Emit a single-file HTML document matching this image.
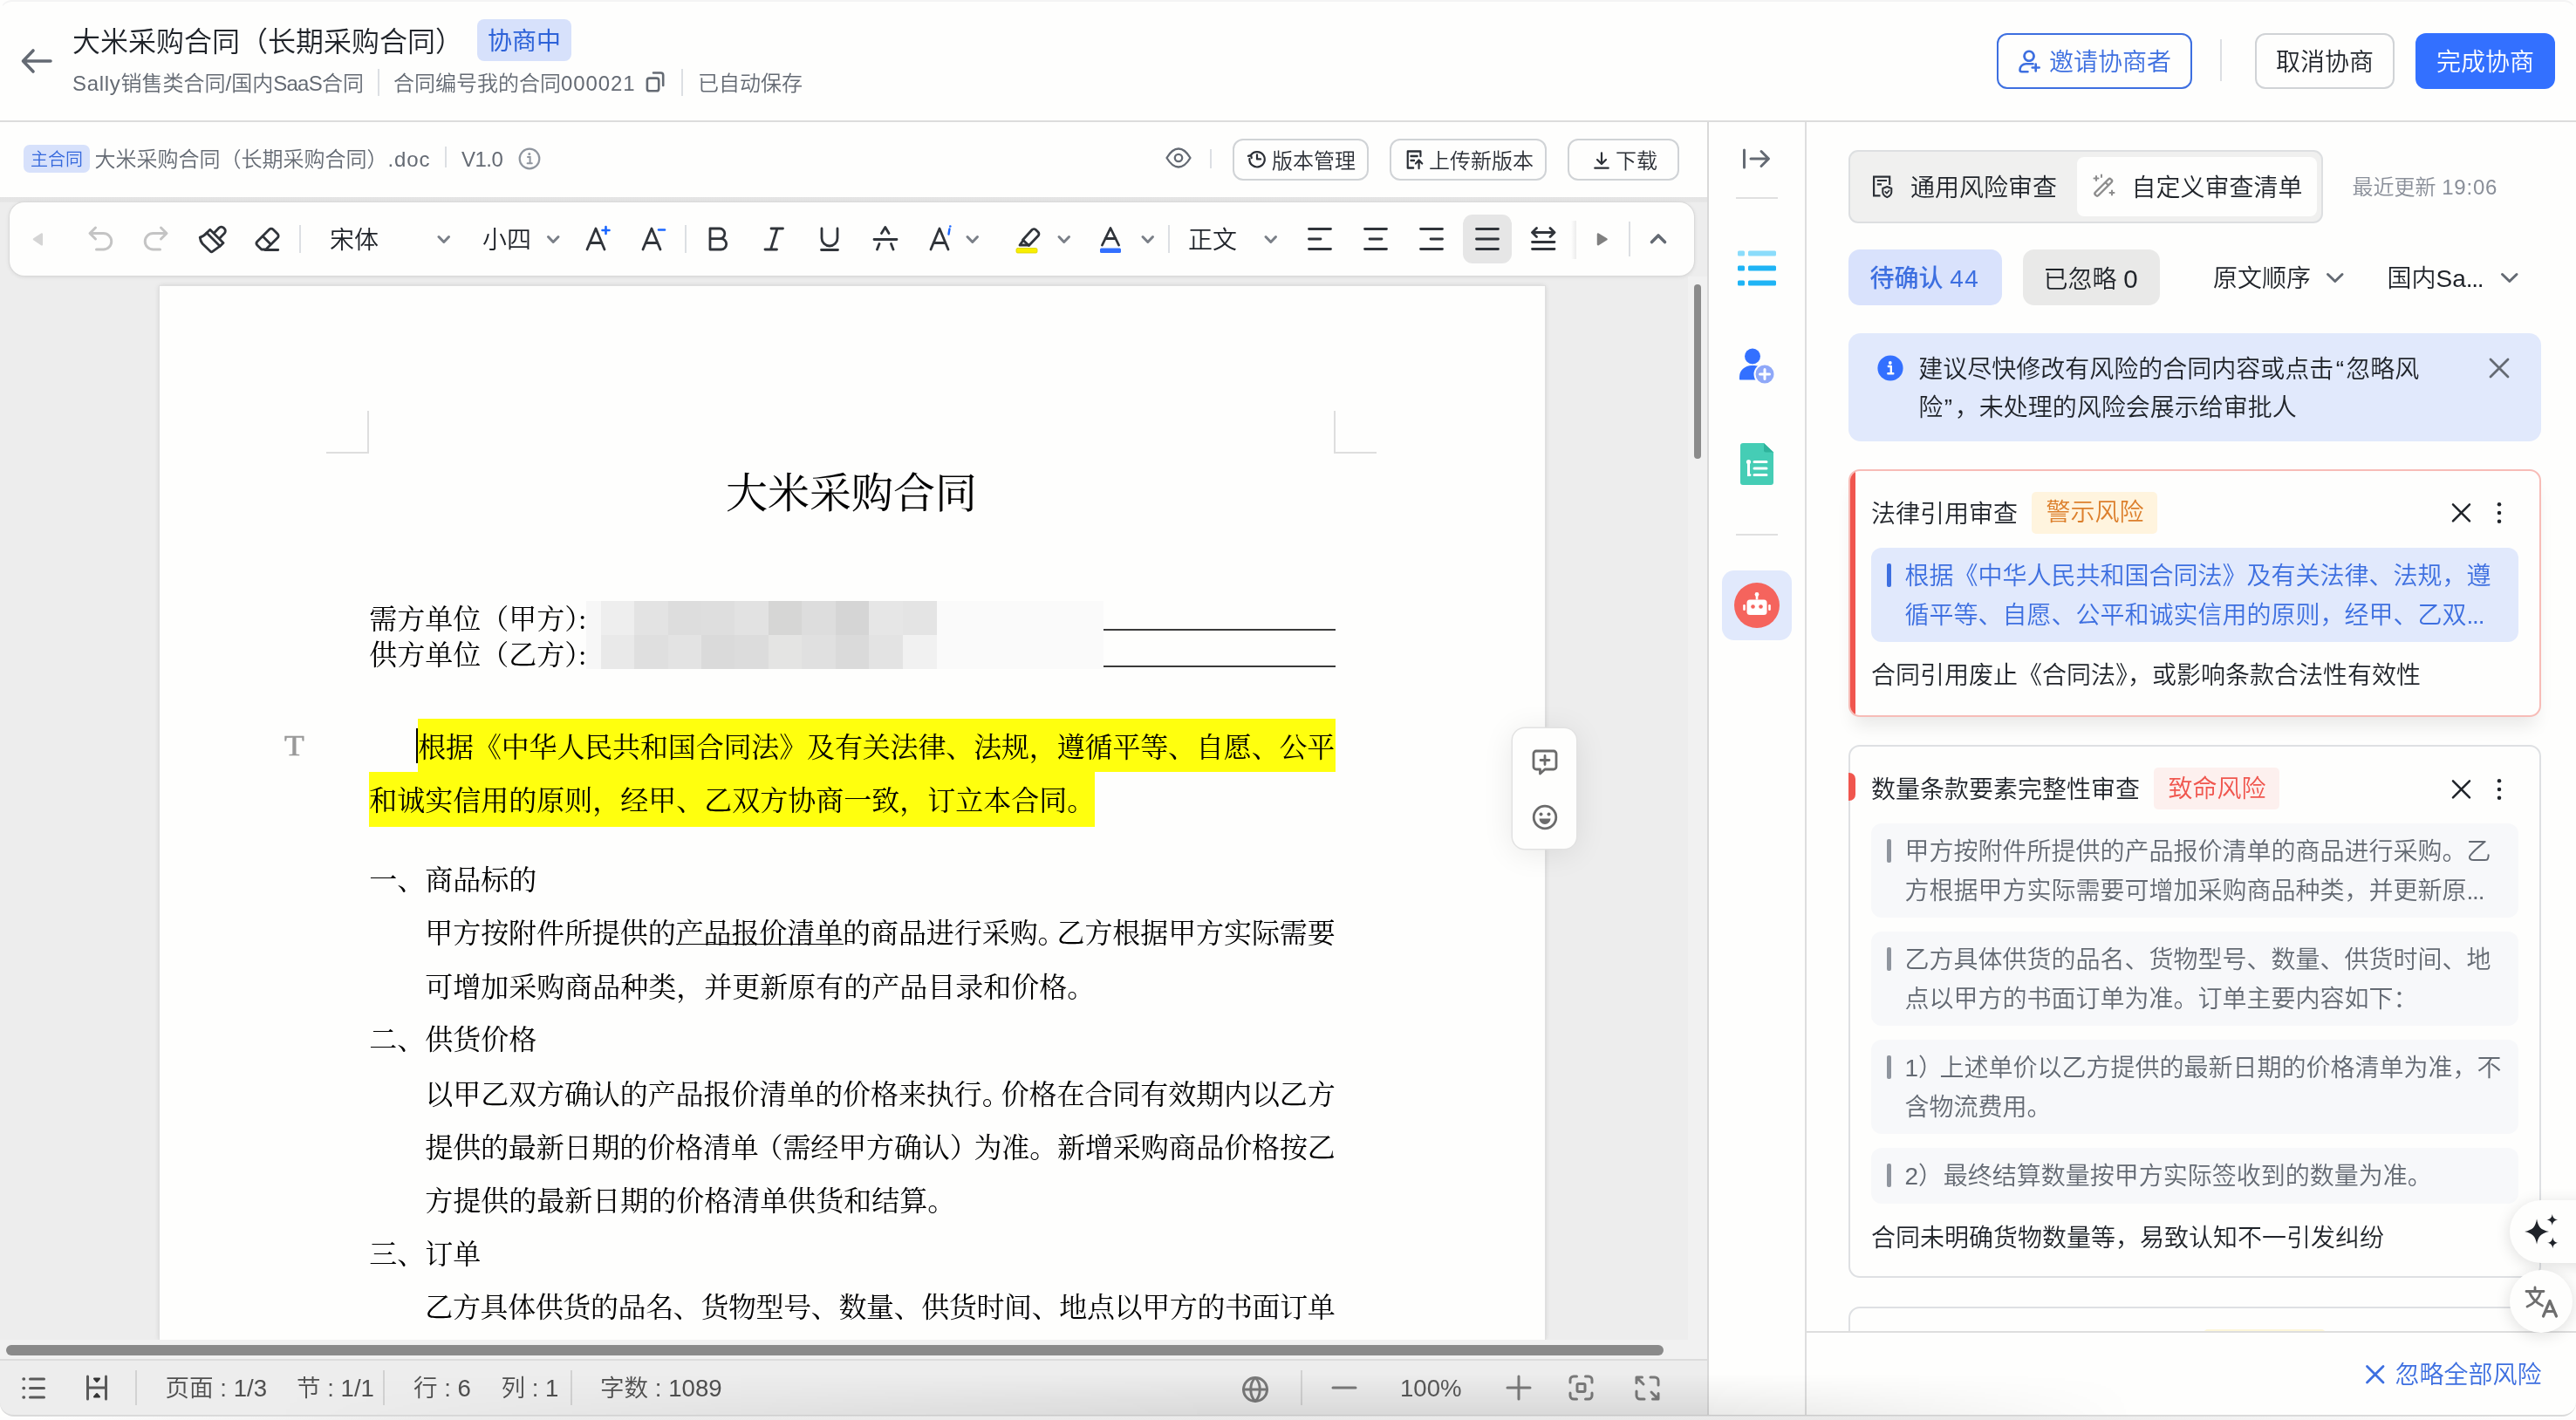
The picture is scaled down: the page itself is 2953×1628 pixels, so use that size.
<!DOCTYPE html>
<html lang="zh-CN">
<head>
<meta charset="utf-8">
<title>大米采购合同（长期采购合同）</title>
<style>
*{box-sizing:border-box;margin:0;padding:0}
html,body{width:2953px;height:1628px;overflow:hidden;background:#fefefd}
body{position:relative;font-weight:350;font-family:"Liberation Sans","Noto Sans CJK SC",sans-serif;color:#1f2329;-webkit-font-smoothing:antialiased}
.a{position:absolute}
.t{position:absolute;white-space:nowrap}
.f32{font-size:32px;line-height:44px;height:44px}
.f28{font-size:28px;line-height:40px;height:40px}
.f24{font-size:24px;line-height:34px;height:34px}
.gray{color:#646a73}
.blue{color:#3d6fe0}
.vsep{position:absolute;width:2px;background:#dcdfe3}
.btn{position:absolute;border:2px solid #d0d3d6;border-radius:12px;background:#fefefd}
svg{position:absolute;overflow:visible}
.ic{fill:none;stroke:#2b2f36;stroke-width:3;stroke-linecap:round;stroke-linejoin:round}
.doc{font-weight:400;font-family:"Liberation Serif","Noto Serif CJK SC",serif;color:#000;font-size:32px;line-height:62px;height:62px;position:absolute;white-space:nowrap}
.j{text-align:justify;text-align-last:justify;white-space:normal;overflow:hidden}
.hp{margin-right:-10px}
.q{position:absolute;left:2145px;width:742px;border-radius:12px;background:#f7f8fa}
.qb{position:absolute;left:18px;top:18px;width:5px;height:27px;border-radius:2px;background:#8f959e}
.ql{position:absolute;left:38.5px;white-space:nowrap;font-size:28px;line-height:44px;height:44px;color:#646a73}
.sb{font-size:27.6px;line-height:40px;height:40px;color:#4f4f4f;margin-top:-0.3px}
</style>
</head>
<body>
<div id="app" style="position:absolute;left:0;top:0;width:2953px;height:1628px;will-change:transform">

<!-- ===== top header ===== -->
<div class="a" style="left:0;top:0;width:2953px;height:60px;border-top:2px solid #f4f4f4;border-left:1px solid rgba(0,0,0,0);border-right:1px solid rgba(0,0,0,0);border-radius:14px 14px 0 0"></div>
<div class="a" style="left:0;top:138px;width:2953px;height:2px;background:#dcdcdc"></div>
<svg style="left:24px;top:56px" width="38" height="28" viewBox="0 0 38 28"><path class="ic" style="stroke:#646a73;stroke-width:3.6" d="M14 2 L2.5 14 L14 26 M3 14 H34"/></svg>
<div class="t f32" style="left:83px;top:25.5px;color:#1f2329">大米采购合同（长期采购合同）</div>
<div class="a" style="left:547px;top:22px;width:108px;height:48px;border-radius:8px;background:#d7e1fb"></div>
<div class="t f28" style="left:559px;top:27.5px;color:#2d62d8;font-weight:400">协商中</div>
<div class="t f24 gray" style="left:83px;top:78.6px"><span style="letter-spacing:.7px">Sally</span>销售类合同/国内<span style="letter-spacing:-.75px">SaaS</span>合同</div>
<div class="vsep" style="left:433px;top:79px;height:31px"></div>
<div class="t f24 gray" style="left:451px;top:78.6px">合同编号我的合同<span style="letter-spacing:.9px">000021</span></div>
<svg style="left:738px;top:80px" width="26" height="28" viewBox="738 80 26 28"><path class="ic" style="stroke:#646a73;stroke-width:2.6" d="M749 83.500 H757.500 A2.700 2.700 0 0 1 760.200 86.200 V98"/><rect x="741.900" y="89.600" width="13.300" height="14.700" rx="2.600" class="ic" style="stroke:#646a73;stroke-width:2.600"/></svg>
<div class="vsep" style="left:781px;top:79px;height:31px"></div>
<div class="t f24 gray" style="left:800px;top:78.6px">已自动保存</div>

<div class="btn" style="left:2289px;top:38px;width:224px;height:64px;border-color:#3d6fe0"></div>
<svg style="left:2310px;top:55px" width="30" height="30" viewBox="2310 55 30 30"><path class="ic" style="stroke:#3d6fe0;stroke-width:2.6" d="M2326 58.8 a5.500 5.500 0 1 0 0.100 0 Z M2330.500 73.200 H2322.500 A7 7 0 0 0 2315.500 80 A2.300 2.300 0 0 0 2317.800 82.300 H2324.500 M2329.700 77.500 H2337.700 M2333.700 73.500 V81.500"/></svg>
<div class="t f28 blue" style="left:2349px;top:52px">邀请协商者</div>
<div class="vsep" style="left:2545px;top:45px;height:48px"></div>
<div class="btn" style="left:2585px;top:38px;width:160px;height:64px"></div>
<div class="t f28" style="left:2609px;top:52px">取消协商</div>
<div class="a" style="left:2769px;top:38px;width:160px;height:64px;border-radius:12px;background:#3370ff"></div>
<div class="t f28" style="left:2793px;top:52px;color:#fff">完成协商</div>

<!-- ===== file bar ===== -->
<div class="a" style="left:27px;top:166px;width:76px;height:32px;border-radius:7px;background:#d7e1fb"></div>
<div class="t" style="color:#3568dc;left:35px;top:167.5px;font-size:20px;line-height:30px;height:30px">主合同</div>
<div class="t f24 gray" style="left:108.5px;top:165.8px">大米采购合同（长期采购合同）<span style="letter-spacing:.9px">.doc</span></div>
<div class="vsep" style="left:510px;top:168px;height:24px"></div>
<div class="t f24 gray" style="left:529px;top:165.5px"><span style="letter-spacing:-.5px">V1.0</span></div>
<svg style="left:594px;top:169px" width="26" height="26" viewBox="0 0 26 26"><circle cx="13" cy="13" r="11.3" fill="none" stroke="#8f959e" stroke-width="2.2"/><path d="M11 11 h2.6 v7 M10.6 18.2 h5.2" fill="none" stroke="#8f959e" stroke-width="2" stroke-linecap="round"/><circle cx="12.8" cy="7.6" r="1.5" fill="#8f959e"/></svg>
<svg style="left:1336px;top:169px" width="30" height="24" viewBox="0 0 30 24"><path d="M1.5 12 C6 4.5 10.5 1.5 15 1.5 S24 4.5 28.500 12 C24 19.500 19.500 22.500 15 22.500 S6 19.500 1.5 12 Z" fill="none" stroke="#646a73" stroke-width="2.3" stroke-linejoin="round"/><circle cx="15" cy="12" r="4.2" fill="none" stroke="#646a73" stroke-width="2.3"/></svg>
<div class="vsep" style="left:1387px;top:171px;height:22px"></div>
<div class="btn" style="left:1413px;top:159px;width:156px;height:48px"></div>
<svg style="left:1430px;top:171px" width="22" height="22" viewBox="0 0 24 24"><path class="ic" style="stroke-width:2.4" d="M4.2 7.5 A9.500 9.500 0 1 1 2.6 12 M1 8.6 L4.400 7.6 L5.2 11 M12 7 V12.500 H16.500"/></svg>
<div class="t f24" style="left:1458px;top:167.7px;color:#2b2f36">版本管理</div>
<div class="btn" style="left:1593px;top:159px;width:180px;height:48px"></div>
<svg style="left:1611px;top:171.3px" width="22" height="24" preserveAspectRatio="none" viewBox="0 0 24 24"><path class="ic" style="stroke-width:2.4" d="M19 8 V2.500 H3 V21.500 H10 M7 8 H15 M7 13 H11 M17 22 V13 M13 16.500 L17 12.500 L21 16.500"/></svg>
<div class="t f24" style="left:1638px;top:167.7px;color:#2b2f36">上传新版本</div>
<div class="btn" style="left:1797px;top:159px;width:128px;height:48px"></div>
<svg style="left:1826px;top:172.5px" width="20" height="22" viewBox="0 0 22 24"><path class="ic" style="stroke-width:2.4" d="M11 2.500 V16 M5.5 11 L11 16.500 L16.500 11 M2.500 21.500 H19.500"/></svg>
<div class="t f24" style="left:1852px;top:167.7px;color:#2b2f36">下载</div>
<!-- ===== editor area ===== -->
<div class="a" style="left:0;top:226px;width:1957px;height:1334px;background:#ededed"></div>
<div class="a" style="left:0;top:226px;width:1957px;height:6px;background:linear-gradient(#e3e3e3,#e6e6e6)"></div>
<!-- page -->
<div class="a" style="left:183px;top:328px;width:1588px;height:1208px;background:#fefefd;box-shadow:0 0 0 1px #e0e0e0,0 0 6px rgba(0,0,0,.16)"></div>
<!-- toolbar -->
<div class="a" style="left:10.5px;top:231.5px;width:1931px;height:84.5px;border-radius:17px;background:#fefefd;box-shadow:0 0 0 1px #dadada,0 1px 5px rgba(0,0,0,.12)"></div>
<svg style="left:0;top:231px" width="1957" height="86" viewBox="0 231 1957 86">
 <g fill="none" stroke-linecap="round" stroke-linejoin="round">
  <path d="M47.8 268.500 L39 274.300 L47.8 280.200 Z" fill="#d5d5d5" stroke="#d5d5d5" stroke-width="2.500"/>
  <!-- undo / redo -->
  <path d="M109.500 261 L103 267.500 L109.500 274 M103.500 267.500 H118.500 A9.250 9.250 0 0 1 118.500 286 H110.500" stroke="#c4c4c4" stroke-width="3"/>
  <path d="M184.500 261 L191 267.500 L184.500 274 M190.500 267.500 H175.500 A9.250 9.250 0 0 0 175.500 286 H183.500" stroke="#c4c4c4" stroke-width="3"/>
  <!-- brush -->
  <g stroke="#30343a" stroke-width="2.8" transform="translate(0,1)">
   <path d="M246 265.500 L251 260.200 A3.600 3.600 0 0 1 256.100 260.100 L257.300 261.300 A3.600 3.600 0 0 1 257.300 266.400 L252.200 271.700"/>
   <path d="M240.800 262.200 L256 277.400 L252.200 281.200 L237 266 Z"/>
   <path d="M237 266 C234.500 269 231.500 270.500 229.200 271 C229.500 274 230.500 276.500 232.200 278.600 L241.300 287.300 A1.600 1.600 0 0 0 243.600 287.300 L252.200 281.200"/>
  </g>
  <!-- eraser -->
  <g stroke="#30343a" stroke-width="2.8" transform="translate(-1.2,0)">
   <path d="M296 277 L310 263 A3 3 0 0 1 314.200 263 L319.500 268.300 A3 3 0 0 1 319.500 272.500 L306 286 H301 L296 281 A3 3 0 0 1 296 277 Z"/>
   <path d="M302.500 271 L311.500 280 M305 286.500 H320"/>
  </g>
  <!-- A+ A- -->
  <g stroke="#30343a" stroke-width="2.8">
   <path d="M673 286 L683 262 L693 286 M676.500 278.500 H689.500"/>
   <path d="M737 286 L747 262 L757 286 M740.500 278.500 H753.500"/>
  </g>
  <path d="M690.500 264 H698.500 M694.500 260 V268" stroke="#1a66ff" stroke-width="2.600"/>
  <path d="M755 263.500 H762" stroke="#1a66ff" stroke-width="2.600"/>
  <!-- B I U S -->
  <g stroke="#30343a" stroke-width="2.8">
   <path d="M814 262 H825 A5.800 5.800 0 0 1 825 273.600 H814 Z M814 273.600 H826.500 A6.200 6.200 0 0 1 826.500 286 H814 Z"/>
   <path d="M884 262 H897.500 M877 286 H890.500 M891 262 L883.500 286"/>
   <path d="M942 262 V273 A9 9 0 0 0 960 273 V262 M941.500 286.500 H960.500"/>
   <path d="M1002 274.500 H1028 M1010.500 267.500 L1014.800 260.500 L1019 267.500 M1008 279.500 L1005.500 286 M1021.500 279.500 L1024 286"/>
   <path d="M1067 286 L1077 262 L1087 286 M1070.500 278.500 H1083.500"/>
  </g>
  <path d="M1088.500 262.500 L1087.500 268.500" stroke="#1a66ff" stroke-width="2.400"/>
  <circle cx="1089.300" cy="259.500" r="1.300" fill="#1a66ff"/>
  <!-- highlighter -->
  <g stroke="#30343a" stroke-width="2.8">
   <path d="M1172.500 275 L1183 263.500 A3 3 0 0 1 1187.200 263.300 L1190 266 A3 3 0 0 1 1190.200 270.200 L1179.500 281.500 Z"/>
   <path d="M1173 275.500 L1169 281 H1176.500 L1179 281"/>
  </g>
  <rect x="1165" y="284.500" width="24" height="5.500" rx="1.500" fill="#f8ee00" stroke="#d8cf00" stroke-width="0.800"/>
  <!-- font colour -->
  <path d="M1263.500 281 L1273 261.500 L1282.500 281 M1267 273.500 H1279" stroke="#30343a" stroke-width="2.8"/>
  <rect x="1261" y="284.500" width="24" height="5.500" rx="1.500" fill="#3370ff"/>
  <!-- chevrons -->
  <g stroke="#7a7f87" stroke-width="3">
   <path d="M503 271.500 L508.800 277.500 L514.500 271.500"/>
   <path d="M628.500 271.500 L634.200 277.500 L640 271.500"/>
   <path d="M1109 271.500 L1114.800 277.500 L1120.500 271.500"/>
   <path d="M1214 271.500 L1219.700 277.500 L1225.500 271.500"/>
   <path d="M1310 271.500 L1315.800 277.500 L1321.500 271.500"/>
   <path d="M1451 271.500 L1456.800 277.500 L1462.500 271.500"/>
  </g>
  <!-- align -->
  <g stroke="#30343a" stroke-width="2.8">
   <path d="M1500.500 262.500 H1525.500 M1500.500 274 H1514 M1500.500 285.500 H1525.500"/>
   <path d="M1564.500 262.500 H1589.500 M1570 274 H1584 M1564.500 285.500 H1589.500"/>
   <path d="M1628.500 262.500 H1653.500 M1640 274 H1653.500 M1628.500 285.500 H1653.500"/>
  </g>
 </g>
</svg>
<div class="a" style="left:1677px;top:246px;width:56px;height:56px;border-radius:11px;background:#e6e6e6"></div>
<svg style="left:0;top:231px" width="1957" height="86" viewBox="0 231 1957 86">
 <g fill="none" stroke-linecap="round" stroke-linejoin="round">
  <path d="M1692.500 262.500 H1717.500 M1692.500 274 H1717.500 M1692.500 285.500 H1717.500" stroke="#30343a" stroke-width="2.8"/>
  <path d="M1757 266.500 H1781.500 M1761.500 261.500 L1756.500 266.500 L1761.500 271.500 M1777 261.500 L1782 266.500 L1777 271.500 M1756.500 277.500 H1782 M1756.500 285.500 H1782" stroke="#30343a" stroke-width="2.8"/>
  <path d="M1832 268.500 L1841.500 274.300 L1832 280.200 Z" fill="#808080" stroke="#808080" stroke-width="2.500"/>
  <path d="M1893.500 277.500 L1901 270 L1908.500 277.500" stroke="#646a73" stroke-width="3.600"/>
 </g>
</svg>
<div class="a" style="left:1801px;top:253px;width:6px;height:44px;background:linear-gradient(90deg,#fefefd,#ececec)"></div>
<div class="vsep" style="left:343px;top:258px;height:32px"></div>
<div class="vsep" style="left:785px;top:258px;height:32px"></div>
<div class="vsep" style="left:1339px;top:258px;height:32px"></div>
<div class="vsep" style="left:1867px;top:254px;height:40px"></div>
<div class="t" style="left:378px;top:255.7px;font-size:28px;line-height:40px;height:40px;color:#1f2329">宋体</div>
<div class="t" style="left:553px;top:255.7px;font-size:28px;line-height:40px;height:40px;color:#1f2329">小四</div>
<div class="t" style="left:1362px;top:255.7px;font-size:28px;line-height:40px;height:40px;color:#1f2329">正文</div>
<!-- scrollbars -->
<div class="a" style="left:1935px;top:317px;width:22px;height:1219px;background:#f1f1f1"></div>
<div class="a" style="left:1942px;top:326px;width:8px;height:200px;border-radius:4px;background:#8b8b8b"></div>
<div class="a" style="left:0;top:1536px;width:1957px;height:23px;background:#f1f1f1"></div>
<div class="a" style="left:7px;top:1542px;width:1900px;height:12px;border-radius:6px;background:#8a8a8a"></div>
<!-- floating comment bar -->
<div class="a" style="left:1734px;top:835px;width:73px;height:137.5px;border-radius:14px;background:#fefefd;box-shadow:0 0 0 1.5px #e2e2e2,0 4px 36px rgba(0,0,0,.09)"></div>
<svg style="left:1755.5px;top:858.5px" width="30" height="30" viewBox="0 0 30 30"><path d="M5 2 H25 A3 3 0 0 1 28 5 V20 A3 3 0 0 1 25 23 H15 L9.500 28 V23 H5 A3 3 0 0 1 2 20 V5 A3 3 0 0 1 5 2 Z M10 12.500 H20 M15 7.500 V17.500" fill="none" stroke="#6b6b6b" stroke-width="2.800" stroke-linejoin="round" stroke-linecap="round"/></svg>
<svg style="left:1755.5px;top:922px" width="30" height="30" viewBox="0 0 30 30"><circle cx="15" cy="15" r="12.800" fill="none" stroke="#6b6b6b" stroke-width="2.800"/><circle cx="10.500" cy="11.500" r="2" fill="#6b6b6b"/><circle cx="19.500" cy="11.500" r="2" fill="#6b6b6b"/><path d="M8.500 16.500 H21.500 A6.500 6.500 0 0 1 8.500 16.500 Z" fill="#6b6b6b"/></svg>
<!-- ===== document ===== -->
<svg style="left:0;top:0" width="1957" height="1536" viewBox="0 0 1957 1536" shape-rendering="crispEdges">
 <path d="M374 519 H422 V471 M1577.500 519 H1529.500 V471" fill="none" stroke="#dedede" stroke-width="2"/>
 <rect x="672" y="689" width="593" height="78" fill="#fafafa"/>
 <rect x="672.0" y="689" width="17.2" height="39" fill="#f7f7f7"/>
 <rect x="672.0" y="728" width="17.2" height="39" fill="#f7f7f7"/>
 <rect x="688.7" y="689" width="38.9" height="39" fill="#eeeeee"/>
 <rect x="688.7" y="728" width="38.9" height="39" fill="#e9e9e9"/>
 <rect x="727.1" y="689" width="38.9" height="39" fill="#e3e3e3"/>
 <rect x="727.1" y="728" width="38.9" height="39" fill="#dfdfdf"/>
 <rect x="765.5" y="689" width="39.0" height="39" fill="#dddddd"/>
 <rect x="765.5" y="728" width="39.0" height="39" fill="#e3e3e3"/>
 <rect x="804.0" y="689" width="38.9" height="39" fill="#dedede"/>
 <rect x="804.0" y="728" width="38.9" height="39" fill="#dadada"/>
 <rect x="842.4" y="689" width="38.9" height="39" fill="#e2e2e2"/>
 <rect x="842.4" y="728" width="38.9" height="39" fill="#dcdcdc"/>
 <rect x="880.8" y="689" width="39.0" height="39" fill="#d6d6d5"/>
 <rect x="880.8" y="728" width="39.0" height="39" fill="#e4e4e3"/>
 <rect x="919.3" y="689" width="38.9" height="39" fill="#dddddd"/>
 <rect x="919.3" y="728" width="38.9" height="39" fill="#e0e0e0"/>
 <rect x="957.7" y="689" width="38.9" height="39" fill="#d5d5d5"/>
 <rect x="957.7" y="728" width="38.9" height="39" fill="#dadada"/>
 <rect x="996.1" y="689" width="38.9" height="39" fill="#e6e6e6"/>
 <rect x="996.1" y="728" width="38.9" height="39" fill="#e3e3e3"/>
 <rect x="1034.5" y="689" width="39.0" height="39" fill="#e4e4e4"/>
 <rect x="1034.5" y="728" width="39.0" height="39" fill="#f1f1f1"/>
 <rect x="1264.5" y="721" width="266.5" height="2" fill="#3a3a3a"/>
 <rect x="1264.5" y="762.5" width="266.5" height="2" fill="#3a3a3a"/>
 <rect x="479" y="823.500" width="1051.500" height="61.500" fill="#ffff0e"/>
 <rect x="423" y="885" width="832" height="62.500" fill="#ffff0e"/>
 <rect x="476.500" y="835" width="2" height="40" fill="#000"/>
 <rect x="775" y="1081.500" width="192" height="1.600" fill="#000"/>
</svg>
<div class="doc" style="left:832px;top:526.2px;font-size:48px;line-height:80px;height:80px">大米采购合同</div>
<div class="doc" style="left:423.3px;top:688.5px;line-height:42px;height:42px">需方单位（甲方）<span style="margin-left:-16px">:</span></div>
<div class="doc" style="left:423.3px;top:729.5px;line-height:42px;height:42px">供方单位（乙方）<span style="margin-left:-16px">:</span></div>
<div class="doc" style="left:479.2px;top:825.5px;letter-spacing:-0.152px">根据《中华人民共和国合同法》及有关法律、法规，遵循平等、自愿、公平</div>
<div class="doc" style="left:423.3px;top:887.3px;">和诚实信用的原则，经甲、乙双方协商一致，订立本合同。</div>
<div class="doc" style="left:423.3px;top:977.6px;">一、商品标的</div>
<div class="doc j" style="letter-spacing:-0.1px;left:487.3px;top:1039.0px;width:1043.4px;">甲方按附件所提供的产品报价清单的商品进行采购<span class="hp">。</span>乙方根据甲方实际需要</div>
<div class="doc" style="left:487.3px;top:1100.5px;">可增加采购商品种类，并更新原有的产品目录和价格。</div>
<div class="doc" style="left:423.3px;top:1161.2px;">二、供货价格</div>
<div class="doc j" style="letter-spacing:-0.1px;left:487.3px;top:1223.5px;width:1043.4px;">以甲乙双方确认的产品报价清单的价格来执行<span class="hp">。</span>价格在合同有效期内以乙方</div>
<div class="doc j" style="letter-spacing:-0.15px;left:487.3px;top:1284.5px;width:1043.4px;">提供的最新日期的价格清单<span style="margin-left:-4px">（</span>需经甲方确认<span style="margin-right:-4px">）</span>为准。新增采购商品价格按乙</div>
<div class="doc" style="left:487.3px;top:1346.0px;">方提供的最新日期的价格清单供货和结算。</div>
<div class="doc" style="left:423.3px;top:1407.0px;">三、订单</div>
<div class="doc" style="left:487.3px;top:1468.0px;letter-spacing:-0.39px">乙方具体供货的品名、货物型号、数量、供货时间、地点以甲方的书面订单</div>
<div class="t" style="left:325.5px;top:838px;font-family:'Liberation Serif',serif;font-size:33px;line-height:34px;height:34px;color:#999;-webkit-text-stroke:.45px #999;transform:scaleX(1.13);transform-origin:0 50%">T</div>
<!-- ===== right rail ===== -->
<div class="a" style="left:1957px;top:140px;width:2px;height:1484px;background:#d9d9d9"></div>
<div class="a" style="left:1959px;top:140px;width:110px;height:1484px;background:#fefefd"></div>
<div class="a" style="left:2069px;top:140px;width:2px;height:1484px;background:#dedede"></div>
<svg style="left:1996px;top:170px" width="36" height="24" viewBox="0 0 36 24"><path d="M3.500 2 V22 M11 12 H31 M23 3.500 L31.500 12 L23 20.500" fill="none" stroke="#646a73" stroke-width="3" stroke-linecap="round" stroke-linejoin="round"/></svg>
<div class="a" style="left:1990px;top:226px;width:48px;height:2px;background:#e0e0e0"></div>
<svg style="left:1992px;top:287px" width="44" height="42" viewBox="0 0 44 42">
 <rect x="0" y="0.500" width="8" height="6" rx="1.500" fill="#8adcfb"/><rect x="12" y="0.500" width="32" height="6" rx="1.500" fill="#8adcfb"/>
 <rect x="0" y="17.500" width="8" height="6" rx="1.500" fill="#1fb4f5"/><rect x="12" y="17.500" width="32" height="6" rx="1.500" fill="#1fb4f5"/>
 <rect x="0" y="34.500" width="8" height="6" rx="1.500" fill="#1fb4f5"/><rect x="12" y="34.500" width="32" height="6" rx="1.500" fill="#1fb4f5"/>
</svg>
<svg style="left:1993px;top:399px" width="42" height="42" viewBox="0 0 42 42">
 <circle cx="16" cy="9.500" r="9" fill="#3370ff"/>
 <path d="M1 36 V33 A14 13 0 0 1 15 20 H18 A14 13 0 0 1 27 23 L20 36.500 H1.500 Z" fill="#3370ff"/>
 <circle cx="30" cy="30" r="11.500" fill="#8fa8f8" stroke="#fefefd" stroke-width="2"/>
 <path d="M30 24.500 V35.500 M24.500 30 H35.500" stroke="#fff" stroke-width="3" stroke-linecap="round"/>
</svg>
<svg style="left:1995px;top:508px" width="38" height="48" viewBox="0 0 38 48">
 <path d="M3 0 H27 L38 10.500 V45 A3 3 0 0 1 35 48 H3 A3 3 0 0 1 0 45 V3 A3 3 0 0 1 3 0 Z" fill="#45cdb5"/>
 <path d="M27 0 L38 10.500 H29 A2 2 0 0 1 27 8.500 Z" fill="#2fb39c"/>
 <g stroke="#fff" stroke-width="3" stroke-linecap="round" fill="none"><path d="M16 21.500 H30 M16 29 H30 M16 36.500 H30 M9.500 22 V36.500 H11"/></g>
 <circle cx="9.500" cy="21.500" r="2.600" fill="#fff"/>
</svg>
<div class="a" style="left:1990px;top:612px;width:48px;height:2px;background:#e0e0e0"></div>
<div class="a" style="left:1974px;top:654px;width:80px;height:80px;border-radius:14px;background:#e1e9fc"></div>
<svg style="left:1988px;top:668px" width="52" height="52" viewBox="0 0 52 52">
 <circle cx="26" cy="26" r="26" fill="#f5645d"/>
 <rect x="14.500" y="19.500" width="23" height="17.500" rx="3.500" fill="#fff"/>
 <path d="M26 19.500 V14.500" stroke="#fff" stroke-width="2.600"/><circle cx="26" cy="13.500" r="2.400" fill="#fff"/>
 <rect x="10.200" y="25" width="2.600" height="7" rx="1.300" fill="#fff"/><rect x="39.200" y="25" width="2.600" height="7" rx="1.300" fill="#fff"/>
 <circle cx="21.500" cy="27.500" r="2.300" fill="#f5645d"/><circle cx="30.500" cy="27.500" r="2.300" fill="#f5645d"/>
</svg>
<!-- ===== right panel ===== -->
<div class="a" style="left:2071px;top:140px;width:882px;height:1484px;background:#fefefd"></div>
<div class="a" style="left:2119px;top:172px;width:543.5px;height:83.5px;border-radius:11px;background:#f0f0ef;border:2px solid #dddfe1"></div>
<div class="a" style="left:2381px;top:180px;width:274.500px;height:68px;border-radius:8px;background:#fefefd"></div>
<svg style="left:2140px;top:195px" width="36" height="36" viewBox="2140 195 36 36"><g fill="none" stroke="#2b2f36" stroke-width="2.2"><path d="M2166.200 212 V202.600 H2148.100 V224.300 H2155.500" stroke-linejoin="miter"/><path d="M2151.800 207 H2163 M2151.800 211.400 H2157"/><path d="M2163.300 214 L2168.300 216 V220.300 C2168.300 223 2166 225 2163.300 226.200 C2160.600 225 2158.300 223 2158.300 220.300 V216 Z" stroke-linejoin="round" stroke-width="2"/><path d="M2161.200 219.900 L2162.900 221.600 L2165.600 218.500" stroke-width="1.700" stroke-linecap="round" stroke-linejoin="round"/></g></svg>
<div class="t f28" style="left:2190px;top:195.500px">通用风险审查</div>
<svg style="left:2398px;top:198.5px" width="28" height="28" viewBox="0 0 28 28"><g fill="none" stroke="#8c8c8c" stroke-width="2.400" stroke-linecap="round" stroke-linejoin="round"><path d="M4 21.500 L19 6.500 A2 2 0 0 1 21.800 6.500 L22.500 7.200 A2 2 0 0 1 22.500 10 L7.500 25 A2 2 0 0 1 4.700 25 L4 24.300 A2 2 0 0 1 4 21.500 Z M15.500 10 L19 13.500"/><path d="M5 3 V8 M2.500 5.500 H7.500 M11 1.500 V4 M23 19.500 V24.500 M20.500 22 H25.500" stroke-width="2"/></g></svg>
<div class="t f28" style="left:2443.5px;top:195.500px">自定义审查清单</div>
<div class="t f24" style="left:2696.500px;top:197.500px;color:#8a8f99">最近更新 <span style="letter-spacing:.8px">19:06</span></div>
<div class="a" style="left:2119px;top:286px;width:176px;height:63.5px;border-radius:13px;background:#d9e2fc"></div>
<div class="t f28 blue" style="left:2143.5px;top:299.7px;font-weight:500">待确认 <span style="letter-spacing:1.4px">44</span></div>
<div class="a" style="left:2319px;top:286px;width:157px;height:63.5px;border-radius:13px;background:#e9e9e8"></div>
<div class="t f28" style="left:2342.5px;top:299.7px">已忽略 <span style="font-size:29.5px">0</span></div>
<div class="t f28" style="left:2537px;top:299.7px">原文顺序</div>
<div class="t f28" style="left:2736.5px;top:299.7px">国内Sa<span style="letter-spacing:-1.3px">...</span></div>
<svg style="left:2664px;top:311px" width="26" height="16" viewBox="0 0 26 16"><path d="M4.500 3.5 L12.800 11.500 L21 3.500" fill="none" stroke="#646a73" stroke-width="3" stroke-linecap="round" stroke-linejoin="round"/></svg>
<svg style="left:2864px;top:311px" width="26" height="16" viewBox="0 0 26 16"><path d="M4.500 3.5 L12.800 11.500 L21 3.500" fill="none" stroke="#646a73" stroke-width="3" stroke-linecap="round" stroke-linejoin="round"/></svg>
<div class="a" style="left:2119px;top:382px;width:793.5px;height:123.500px;border-radius:14px;background:#e1e9fc"></div>
<svg style="left:2152px;top:407px" width="30" height="30" viewBox="0 0 30 30"><circle cx="15" cy="15" r="14.600" fill="#3370ff"/><circle cx="14.800" cy="9" r="1.900" fill="#fff"/><path d="M12.800 13 H15.800 V21 M12.300 21.300 H18.300" fill="none" stroke="#fff" stroke-width="2.400" stroke-linecap="round" stroke-linejoin="round"/></svg>
<div class="t f28" style="left:2199.3px;top:402px;line-height:44px;height:44px">建议尽快修改有风险的合同内容或点击<span style="margin:0 2px 0 2.5px">“</span>忽略风</div>
<div class="t f28" style="left:2199.3px;top:446px;line-height:44px;height:44px">险<span style="margin:0 2.5px 0 1.5px">”</span>，未处理的风险会展示给审批人</div>
<svg style="left:2853px;top:410px" width="24" height="24" viewBox="0 0 24 24"><path d="M2 2 L22 22 M22 2 L2 22" fill="none" stroke="#646a73" stroke-width="2.800" stroke-linecap="round"/></svg>
<div class="a" style="left:2119px;top:538px;width:793.5px;height:283.5px;border-radius:13px;background:#fefefd;border:2px solid #f7bcb7;box-shadow:0 16px 20px -6px rgba(0,0,0,.085);overflow:hidden"><div class="a" style="left:-2px;top:-2px;width:8px;height:290px;background:#f0564e"></div></div>
<div class="t f28" style="left:2145px;top:569.8px">法律引用审查</div>
<div class="a" style="left:2329px;top:563.5px;width:144px;height:48px;border-radius:5px;background:#fff4de"></div>
<div class="t f28" style="left:2345.5px;top:568px;color:#dc7f2c">警示风险</div>
<svg style="left:2810px;top:576.0px" width="24" height="24" viewBox="0 0 24 24"><path d="M2 2.300 L21 21.300 M21 2.300 L2 21.300" fill="none" stroke="#1f2329" stroke-width="2.500" stroke-linecap="round"/></svg><svg style="left:2861px;top:575.0px" width="8" height="26" viewBox="0 0 8 26"><circle cx="4" cy="3.200" r="2.250" fill="#1f2329"/><circle cx="4" cy="13" r="2.250" fill="#1f2329"/><circle cx="4" cy="22.800" r="2.250" fill="#1f2329"/></svg>
<div class="q" style="top:628px;height:107.5px;background:#e1e9fc"><div class="qb" style="background:#3d6fe0"></div><div class="ql" style="top:11.3px;color:#3d6fe0">根据《中华人民共和国合同法》及有关法律、法规，遵</div><div class="ql" style="top:55.6px;color:#3d6fe0">循平等、自愿、公平和诚实信用的原则，经甲、乙双<span style="letter-spacing:-1.2px">...</span></div></div>
<div class="t f28" style="left:2145px;top:755.3px">合同引用废止《合同法》，或影响条款合法性有效性</div>
<div class="a" style="left:2119px;top:854px;width:793.5px;height:611.3px;border-radius:13px;background:#fefefd;border:2px solid #dee0e3"></div>
<div class="a" style="left:2119px;top:885.500px;width:8px;height:32.500px;border-radius:0 7px 7px 0;background:#f0564e"></div>
<div class="t f28" style="left:2145px;top:885.5px">数量条款要素完整性审查</div>
<div class="a" style="left:2468.500px;top:880px;width:144px;height:47.5px;border-radius:5px;background:#fdf0ee"></div>
<div class="t f28" style="left:2485.5px;top:884.500px;color:#f0564e">致命风险</div>
<svg style="left:2810px;top:892.5px" width="24" height="24" viewBox="0 0 24 24"><path d="M2 2.300 L21 21.300 M21 2.300 L2 21.300" fill="none" stroke="#1f2329" stroke-width="2.500" stroke-linecap="round"/></svg><svg style="left:2861px;top:891.5px" width="8" height="26" viewBox="0 0 8 26"><circle cx="4" cy="3.200" r="2.250" fill="#1f2329"/><circle cx="4" cy="13" r="2.250" fill="#1f2329"/><circle cx="4" cy="22.800" r="2.250" fill="#1f2329"/></svg>
<div class="q" style="top:944px;height:107.5px;background:#f7f8fa"><div class="qb" style="background:#8f959e"></div><div class="ql" style="top:11.3px;color:#646a73">甲方按附件所提供的产品报价清单的商品进行采购。乙</div><div class="ql" style="top:55.6px;color:#646a73">方根据甲方实际需要可增加采购商品种类，并更新原<span style="letter-spacing:-1.2px">...</span></div></div>
<div class="q" style="top:1068px;height:107.5px;background:#f7f8fa"><div class="qb" style="background:#8f959e"></div><div class="ql" style="top:11.3px;color:#646a73">乙方具体供货的品名、货物型号、数量、供货时间、地</div><div class="ql" style="top:55.6px;color:#646a73">点以甲方的书面订单为准。订单主要内容如下：</div></div>
<div class="q" style="top:1192px;height:107.5px;background:#f7f8fa"><div class="qb" style="background:#8f959e"></div><div class="ql" style="top:11.3px;color:#646a73">1<span style="margin-right:-3.5px">）</span>上述单价以乙方提供的最新日期的价格清单为准，不</div><div class="ql" style="top:55.6px;color:#646a73">含物流费用。</div></div>
<div class="q" style="top:1316px;height:63.5px;background:#f7f8fa"><div class="qb" style="background:#8f959e"></div><div class="ql" style="top:11.3px;color:#646a73">2<span style="margin-right:.7px">）</span>最终结算数量按甲方实际签收到的数量为准。</div></div>
<div class="t f28" style="left:2145px;top:1399.5px">合同未明确货物数量等，易致认知不一引发纠纷</div>
<div class="a" style="left:2119px;top:1497.5px;width:793.5px;height:200px;border-radius:13px;background:#fefefd;border:2px solid #dee0e3"></div>
<div class="a" style="left:2526px;top:1524px;width:140px;height:10px;border-radius:8px;background:#fdf6d8"></div>
<div class="a" style="left:2071px;top:1526px;width:882px;height:98px;background:#fefefd;border-top:2px solid #dedede"></div>
<svg style="left:2711px;top:1563.5px" width="24" height="24" viewBox="0 0 24 24"><path d="M2.500 2.500 L21 21 M21 2.500 L2.500 21" fill="none" stroke="#3d6fe0" stroke-width="2.800" stroke-linecap="round"/></svg>
<div class="t f28 blue" style="left:2745.5px;top:1557px">忽略全部风险</div>
<div class="a" style="left:2877px;top:1376px;width:100px;height:72px;border-radius:36px 0 0 36px;background:#fefefd;box-shadow:0 3px 18px rgba(0,0,0,.13)"></div>
<div class="a" style="left:2877px;top:1456px;width:72px;height:72px;border-radius:36px;background:#fefefd;box-shadow:0 3px 18px rgba(0,0,0,.13)"></div>
<svg style="left:2892.5px;top:1390.5px" width="43" height="43" viewBox="0 0 40 40"><g fill="#1f2329"><path d="M14 6 C15.500 14.500 18 17.500 27 19.500 C18 21.500 15.500 24.500 14 33 C12.500 24.500 10 21.500 1 19.500 C10 17.500 12.500 14.500 14 6 Z"/><path d="M30.500 1 C31.200 5 32.500 6.300 36.500 7 C32.500 7.700 31.200 9 30.500 13 C29.800 9 28.500 7.700 24.500 7 C28.500 6.300 29.800 5 30.500 1 Z"/><path d="M31 25.500 C31.700 29.500 33 30.800 37 31.500 C33 32.200 31.700 33.500 31 37.500 C30.300 33.500 29 32.200 25 31.500 C29 30.800 30.300 29.500 31 25.500 Z"/></g></svg>
<svg style="left:2894px;top:1474px" width="40" height="38" viewBox="0 0 40 38"><g fill="none" stroke="#6e6e6e" stroke-width="2.800" stroke-linecap="round" stroke-linejoin="round"><path d="M2 6.500 H22 M12 2 V6.500 M5.500 7 C8 14 13 19.500 20.500 23 M18.500 7 C16.500 14.500 11 20.500 3 24"/><path d="M21.500 35 L29 17.500 L36.500 35 M24 29.500 H34" stroke-width="3.200"/></g></svg>
<!-- ===== status bar ===== -->
<div class="a" style="left:0;top:1558px;width:1957px;height:65px;background:#ededed;border-top:2px solid #dcdcdc;border-bottom-left-radius:14px"></div>
<div class="a" style="left:0;top:1560px;width:2953px;height:64px;border-bottom:2px solid #dadada;border-radius:0 0 16px 16px"></div>
<div class="a" style="left:0;top:1624px;width:2953px;height:4px;background:linear-gradient(90deg,#fdfdfd 0,#fdfdfd 40px,#ececec 500px,#e9e9e9 2300px,#fbfbfb 2800px,#fdfdfd 2953px)"></div>
<svg style="left:0;top:1560px" width="1957" height="62" viewBox="0 1560 1957 62">
 <g fill="none" stroke="#5a5a5a" stroke-width="3" stroke-linecap="round" stroke-linejoin="round">
  <path d="M34.500 1581 H50.500 M34.500 1591.500 H50.500 M34.500 1602 H50.500"/>
  <path d="M27 1581 H27.500 M27 1591.500 H27.500 M27 1602 H27.500" stroke-width="3.400"/>
  <path d="M100.500 1578 V1604 M121.500 1578 V1604 M100.500 1591 H121.500"/>
  <path d="M108 1580.500 H114 L111 1584 Z M108 1601.500 H114 L111 1598 Z" fill="#333" stroke="#333" stroke-width="2"/>
 </g>
 <g fill="none" stroke="#7a7a7a" stroke-width="3" stroke-linecap="round" stroke-linejoin="round">
  <circle cx="1439" cy="1593" r="13.500"/><path d="M1425.500 1593 H1452.500 M1439 1579.500 C1432 1586 1432 1600 1439 1606.500 C1446 1600 1446 1586 1439 1579.500"/>
  <path d="M1528 1591 H1554 M1728 1591 H1754 M1741 1578 V1604"/>
  <path d="M1800 1585 V1582 A4 4 0 0 1 1804 1578 H1807.500 M1817.500 1578 H1821 A4 4 0 0 1 1825 1582 V1585 M1825 1597 V1600 A4 4 0 0 1 1821 1604 H1817.500 M1807.500 1604 H1804 A4 4 0 0 1 1800 1600 V1597"/>
  <rect x="1808" y="1586.500" width="9" height="9" rx="1.500"/>
  <path d="M1876 1585.500 V1579 H1882.500 M1876.500 1579.500 L1884 1587 M1892 1579 H1897 A4 4 0 0 1 1901 1583 V1588 M1876 1595 V1600 A4 4 0 0 0 1880 1604 H1885 M1901 1597.500 V1604 H1894.500 M1900.500 1603.500 L1893 1596"/>
 </g>
</svg>
<div class="vsep" style="left:155px;top:1571px;height:40px;background:#d2d2d2"></div>
<div class="vsep" style="left:439px;top:1571px;height:40px;background:#d2d2d2"></div>
<div class="vsep" style="left:654px;top:1571px;height:40px;background:#d2d2d2"></div>
<div class="vsep" style="left:1491px;top:1571px;height:40px;background:#d2d2d2"></div>
<div class="t sb" style="left:189.5px;top:1572px">页面 : 1/3</div>
<div class="t sb" style="left:340px;top:1572px">节 : 1/1</div>
<div class="t sb" style="left:474px;top:1572px">行 : 6</div>
<div class="t sb" style="left:574.5px;top:1572px">列 : 1</div>
<div class="t sb" style="left:688px;top:1572px">字数 : 1089</div>
<div class="t sb" style="left:1605px;top:1572px;color:#585858">100%</div>
<div class="a" style="left:0;top:1575px;width:2953px;height:48px;background:linear-gradient(to bottom,rgba(0,0,0,0),rgba(0,0,0,.085));-webkit-mask-image:linear-gradient(90deg,transparent 300px,#000 1400px,#000 1950px,transparent 2450px);mask-image:linear-gradient(90deg,transparent 300px,#000 1400px,#000 1950px,transparent 2450px)"></div>
</div>
</body>
</html>
